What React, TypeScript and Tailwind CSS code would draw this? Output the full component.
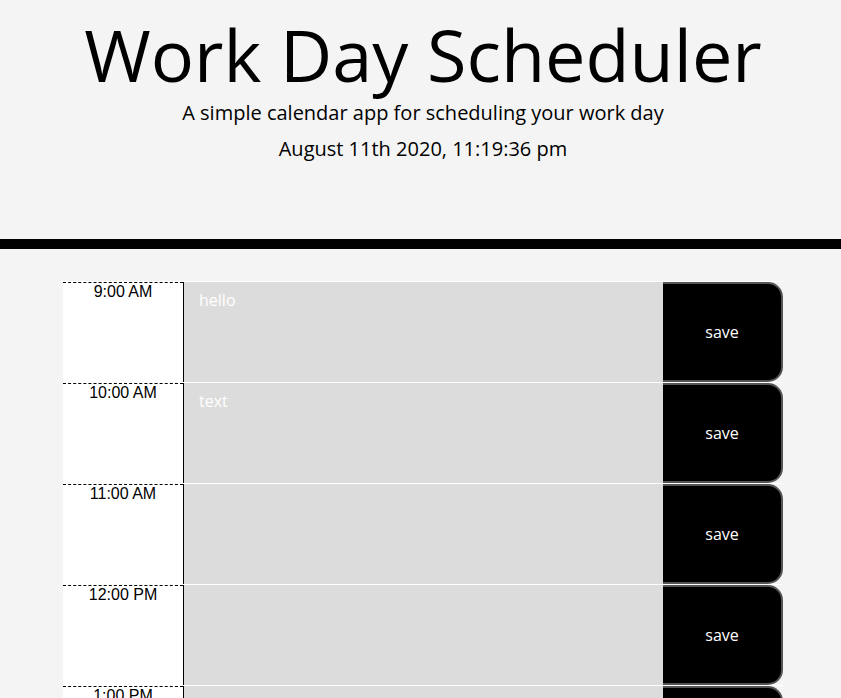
const hours = [
  { label: '9:00 AM', text: 'hello' },
  { label: '10:00 AM', text: 'text' },
  { label: '11:00 AM', text: '' },
  { label: '12:00 PM', text: '' },
  { label: '1:00 PM', text: '' },
  { label: '2:00 PM', text: '' },
  { label: '3:00 PM', text: '' },
  { label: '4:00 PM', text: '' },
  { label: '5:00 PM', text: '' },
];

function TimeBlock({ label, text }: { label: string; text: string }) {
  return (
    <div className="flex h-[101px] border-t border-white">
      <div className="w-[120px] shrink-0 bg-white border-t border-dashed border-black pt-px text-center text-[16px] leading-4 text-black font-['Liberation_Sans',Arial,sans-serif]">
        {label}
      </div>
      <textarea
        value={text}
        readOnly
        className="w-[480px] shrink-0 resize-none border-l border-black bg-[#dcdcdc] pt-[10px] px-[15px] text-[16px] leading-4 text-white outline-none"
      />
      <button className="w-[120px] shrink-0 flex items-center justify-center bg-black text-white text-[16px] border-2 border-l-0 border-[#555555] rounded-r-[15px]">
        save
      </button>
    </div>
  );
}

export default function App() {
  return (
    <div className="min-h-screen bg-[#f4f4f4] font-['Open_Sans',sans-serif] text-black">
      <header className="pt-[11px] pb-[80px] pl-[5px] text-center border-b-[10px] border-black">
        <h1 className="text-[72px] leading-[1.2] font-normal mb-[6px]">Work Day Scheduler</h1>
        <p className="text-[20px] leading-5 mb-4">A simple calendar app for scheduling your work day</p>
        <p className="text-[20px] leading-5">August 11th 2020, 11:19:36 pm</p>
      </header>
      <div className="mt-8 pl-[63px]">
        <div className="w-[720px]">
          {hours.map((h) => (
            <TimeBlock key={h.label} label={h.label} text={h.text} />
          ))}
        </div>
      </div>
    </div>
  );
}
